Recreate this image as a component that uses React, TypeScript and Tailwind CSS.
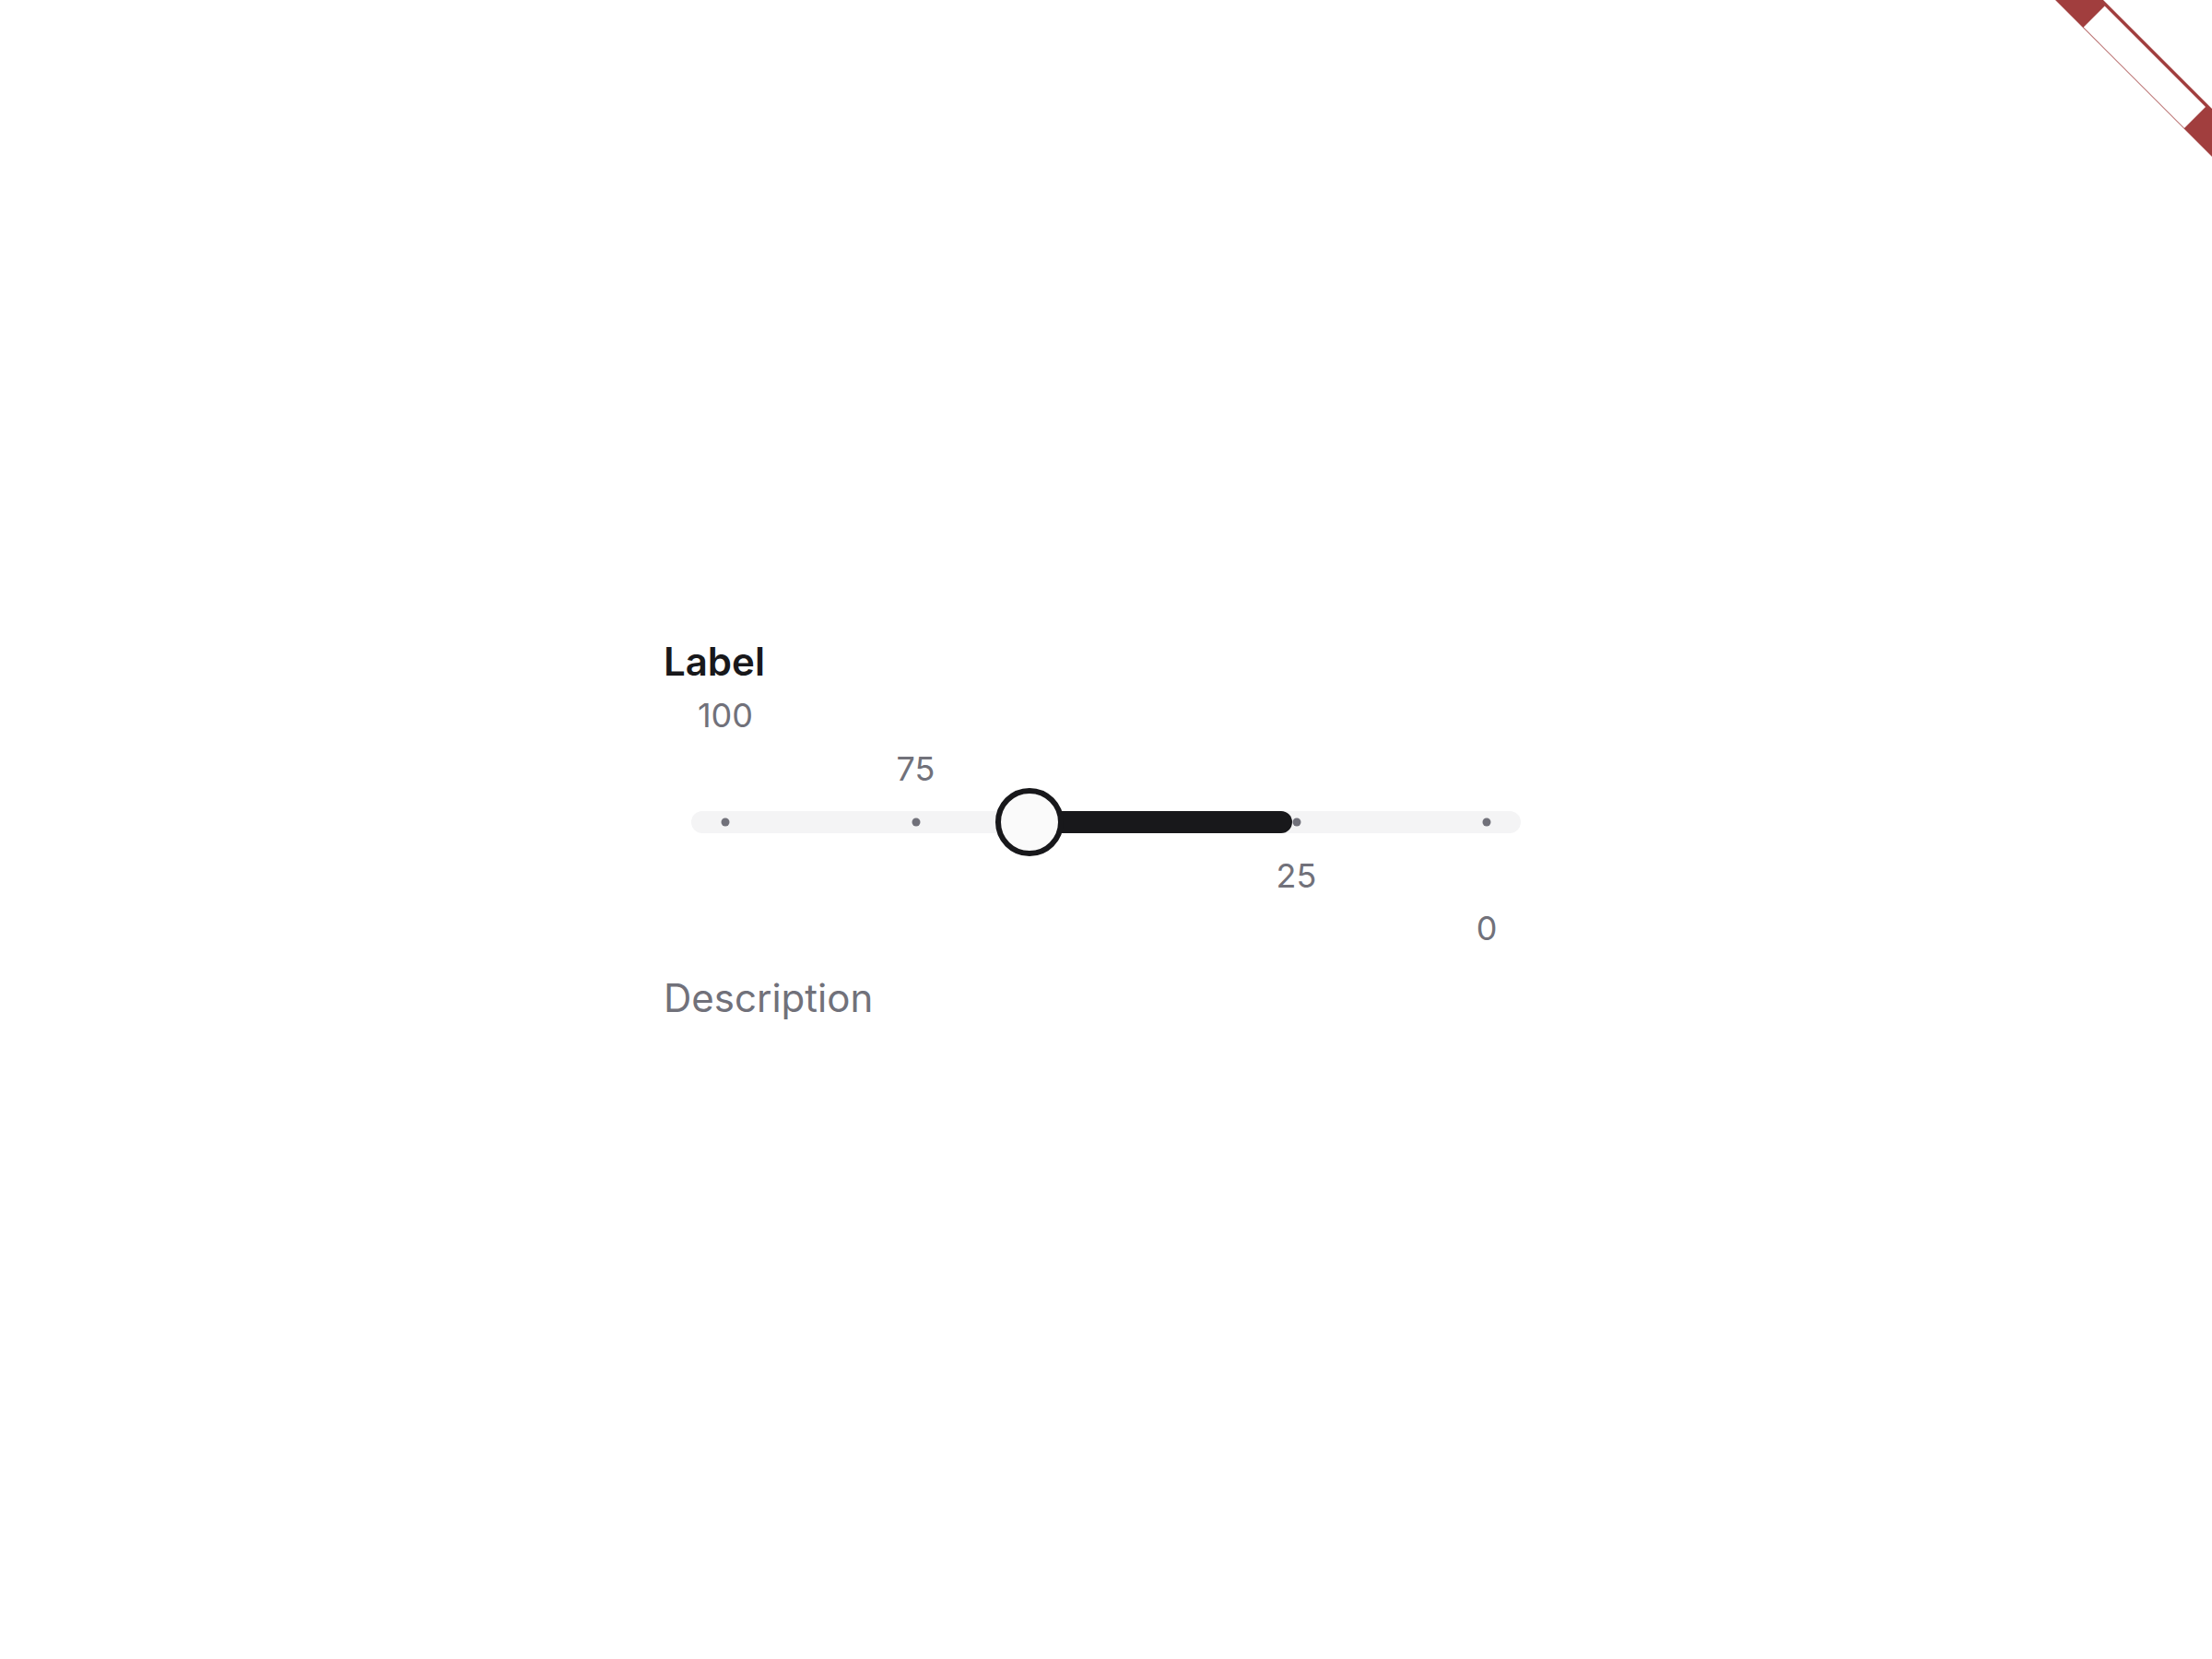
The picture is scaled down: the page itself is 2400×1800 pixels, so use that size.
export default function App() {
  return (
    <div
      className="relative h-[1800px] w-full overflow-hidden bg-white"
      style={{ fontFamily: "Inter, 'Noto Sans', sans-serif" }}
    >
      <svg
        className="absolute right-0 top-0 h-[180px] w-[200px]"
        viewBox="0 0 200 180"
        aria-hidden="true"
      >
        <polygon points="30,0 82,0 200,118 200,170" fill="#a13e3e" />
        <polygon points="60.6,29.6 83.6,6.6 193,116 170,139" fill="#ffffff" />
      </svg>

      <div className="flex h-full items-center justify-center">
        <div className="flex w-[960px] flex-col">
          <div className="text-[42px] font-semibold leading-[63px] text-[#18181b]">Label</div>

          <div className="h-[302px] pt-[131px]">
            <div className="relative mx-[30px] h-[24px] rounded-full bg-[#f4f4f5]">
              <span className="absolute left-[37px] top-1/2 h-[9px] w-[9px] -translate-x-1/2 -translate-y-1/2 rounded-full bg-[#71717a]" />
              <span className="absolute left-[243.5px] top-1/2 h-[9px] w-[9px] -translate-x-1/2 -translate-y-1/2 rounded-full bg-[#71717a]" />
              <span className="absolute left-[450px] top-1/2 h-[9px] w-[9px] -translate-x-1/2 -translate-y-1/2 rounded-full bg-[#71717a]" />
              <span className="absolute left-[656.5px] top-1/2 h-[9px] w-[9px] -translate-x-1/2 -translate-y-1/2 rounded-full bg-[#71717a]" />
              <span className="absolute left-[863px] top-1/2 h-[9px] w-[9px] -translate-x-1/2 -translate-y-1/2 rounded-full bg-[#71717a]" />

              <span className="absolute left-[37px] top-[-122px] -translate-x-1/2 whitespace-nowrap text-[36px] leading-[36px] text-[#71717a]">100</span>
              <span className="absolute left-[243.5px] top-[-64.5px] -translate-x-1/2 whitespace-nowrap text-[36px] leading-[36px] text-[#71717a]">75</span>
              <span className="absolute left-[656.5px] top-[51.5px] -translate-x-1/2 whitespace-nowrap text-[36px] leading-[36px] text-[#71717a]">25</span>
              <span className="absolute left-[863px] top-[108.5px] -translate-x-1/2 whitespace-nowrap text-[36px] leading-[36px] text-[#71717a]">0</span>

              <div className="absolute left-[367px] top-0 h-full w-[285px] rounded-r-full bg-[#18181b]" />
              <div className="absolute left-[367px] top-1/2 h-[74px] w-[74px] -translate-x-1/2 -translate-y-1/2 rounded-full border-[6px] border-[#18181b] bg-[#fafafa]" />
            </div>
          </div>

          <div className="text-[42px] leading-[63px] text-[#71717a]">Description</div>
        </div>
      </div>
    </div>
  );
}
